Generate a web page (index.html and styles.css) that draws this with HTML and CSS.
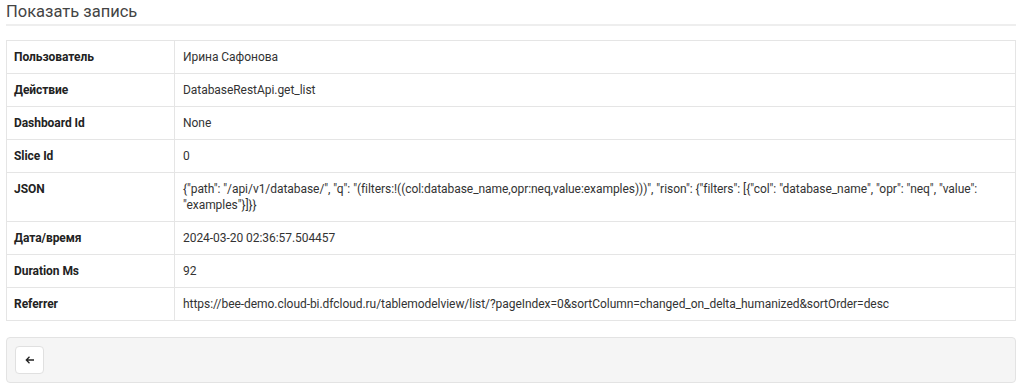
FILE: index.html
```html
<!DOCTYPE html>
<html lang="ru">
<head>
    <meta charset="UTF-8">
    <title>Показать запись</title>
    <link rel="stylesheet" href="styles.css">
</head>
<body>

<div class="page">
    <h2 class="page-title">Показать запись</h2>

    <table class="record-table">
        <tr><th>Пользователь</th><td>Ирина Сафонова</td></tr>
        <tr><th>Действие</th><td>DatabaseRestApi.get_list</td></tr>
        <tr><th>Dashboard Id</th><td>None</td></tr>
        <tr><th>Slice Id</th><td>0</td></tr>
        <tr><th>JSON</th><td>{"path": "/api/v1/database/", "q": "(filters:!((col:database_name,opr:neq,value:examples)))", "rison": {"filters": [{"col": "database_name", "opr": "neq", "value": "examples"}]}}</td></tr>
        <tr><th>Дата/время</th><td>2024-03-20 02:36:57.504457</td></tr>
        <tr><th>Duration Ms</th><td>92</td></tr>
        <tr><th>Referrer</th><td>https://bee-demo.cloud-bi.dfcloud.ru/tablemodelview/list/?pageIndex=0&amp;sortColumn=changed_on_delta_humanized&amp;sortOrder=desc</td></tr>
    </table>

    <div class="well">
        <button class="back-button" title="Назад">
            <svg width="10" height="10" viewBox="0 0 10 10"><path d="M9 5H1.5M4.5 1.8L1.3 5l3.2 3.2" fill="none" stroke="#222" stroke-width="1.3"/></svg>
        </button>
    </div>
</div>

</body>
</html>
```

FILE: styles.css
```css
body { margin: 0; padding: 0; font-family: Roboto, "Noto Sans", sans-serif; font-size: 12px; color: #333; background-color: #fff; }
.page { padding: 0 2px 0 6px; }
.page-title { margin: 0; padding: 3px 0 4px; font-size: 16.5px; font-weight: 400; line-height: 17px; color: #444; border-bottom: 2px solid #eee; }
.record-table { width: 100%; margin-top: 14px; border-collapse: collapse; border: 1px solid #e5e5e5; letter-spacing: -0.05px; }
.record-table th, .record-table td { padding: 8px 7px; line-height: 16px; border-top: 1px solid #e5e5e5; text-align: left; vertical-align: top; }
.record-table th { width: 153px; font-weight: 700; color: #222; border-right: 1px solid #e5e5e5; }
.record-table td { padding-left: 8px; color: #333; }
.well { margin-top: 16px; padding: 8px; background-color: #f5f5f5; border: 1px solid #e3e3e3; border-radius: 4px; }
.back-button { display: flex; align-items: center; justify-content: center; width: 29px; height: 28px; padding: 0; background-color: #fff; border: 1px solid #e0e0e0; border-radius: 4px; cursor: pointer; }
```
